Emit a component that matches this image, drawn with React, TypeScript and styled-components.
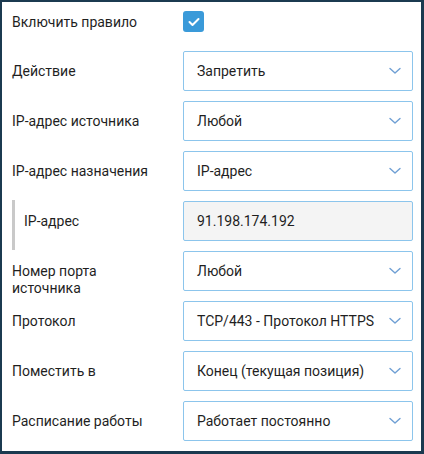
import React from "react";
import styled, { createGlobalStyle } from "styled-components";

const Global = createGlobalStyle`
  html, body { margin: 0; padding: 0; background: #ffffff; }
  * { box-sizing: border-box; }
`;

const Frame = styled.div`
  width: 424px;
  height: 454px;
  border-style: solid;
  border-color: #1b3a50;
  border-width: 2px 3px 3px 2px;
  background: #ffffff;
  padding: 9px 8px 10px 10px;
  font-family: Roboto, "Liberation Sans", Arial, sans-serif;
  font-size: 14px;
  color: #1f1f1f;
`;

const Grid = styled.div`
  display: grid;
  grid-template-columns: 159px 230px;
  column-gap: 12px;
  row-gap: 10px;
  grid-auto-rows: 40px;
  grid-template-rows: 30px;
`;

const Label = styled.div`
  padding-top: 12px;
  line-height: 17px;
  padding-right: 8px;
`;

const CheckLabel = styled.div`
  line-height: 20px;
  padding-top: 1px;
`;

const IndentLabel = styled.div`
  border-left: 3px solid #c9c9c9;
  padding-left: 9px;
  padding-top: 13px;
  line-height: 17px;
  height: 50px;
  margin-top: -1px;
  margin-bottom: -10px;
`;

const Checkbox = styled.span`
  display: inline-flex;
  align-items: center;
  justify-content: center;
  width: 21px;
  height: 21px;
  border-radius: 3px;
  background: #3a9ad9;
`;

const Field = styled.div<{ $readOnly?: boolean }>`
  display: flex;
  align-items: center;
  justify-content: space-between;
  height: 40px;
  border: 1px solid #8cc5ec;
  border-radius: 2px;
  padding: 0 11px 0 13px;
  background: ${(p) => (p.$readOnly ? "#f4f4f4" : "#ffffff")};
  white-space: nowrap;
  line-height: 17px;
`;

const Chevron = () => (
  <svg width="12" height="8" viewBox="0 0 12 8" fill="none">
    <path d="M1 1.5 L6 6 L11 1.5" stroke="#6f9fd4" strokeWidth="1.4" strokeLinecap="round" strokeLinejoin="round" />
  </svg>
);

const Select = ({ value }: { value: string }) => (
  <Field>
    <span>{value}</span>
    <Chevron />
  </Field>
);

const rows: { label: string; value: string }[] = [
  { label: "Действие", value: "Запретить" },
  { label: "IP-адрес источника", value: "Любой" },
  { label: "IP-адрес назначения", value: "IP-адрес" },
];

const rows2: { label: string; value: string }[] = [
  { label: "Номер порта источника", value: "Любой" },
  { label: "Протокол", value: "TCP/443 - Протокол HTTPS" },
  { label: "Поместить в", value: "Конец (текущая позиция)" },
  { label: "Расписание работы", value: "Работает постоянно" },
];

export default function App() {
  return (
    <>
      <Global />
      <Frame>
        <Grid>
          <CheckLabel>Включить правило</CheckLabel>
          <div>
            <Checkbox>
              <svg width="12" height="10" viewBox="0 0 12 10" fill="none">
                <path d="M1.5 5 L4.5 8 L10.5 2" stroke="#ffffff" strokeWidth="2" strokeLinecap="round" strokeLinejoin="round" />
              </svg>
            </Checkbox>
          </div>
          {rows.map((r) => (
            <React.Fragment key={r.label}>
              <Label>{r.label}</Label>
              <Select value={r.value} />
            </React.Fragment>
          ))}
          <IndentLabel>IP-адрес</IndentLabel>
          <Field $readOnly>
            <span>91.198.174.192</span>
          </Field>
          {rows2.map((r) => (
            <React.Fragment key={r.label}>
              <Label>{r.label}</Label>
              <Select value={r.value} />
            </React.Fragment>
          ))}
        </Grid>
      </Frame>
    </>
  );
}
